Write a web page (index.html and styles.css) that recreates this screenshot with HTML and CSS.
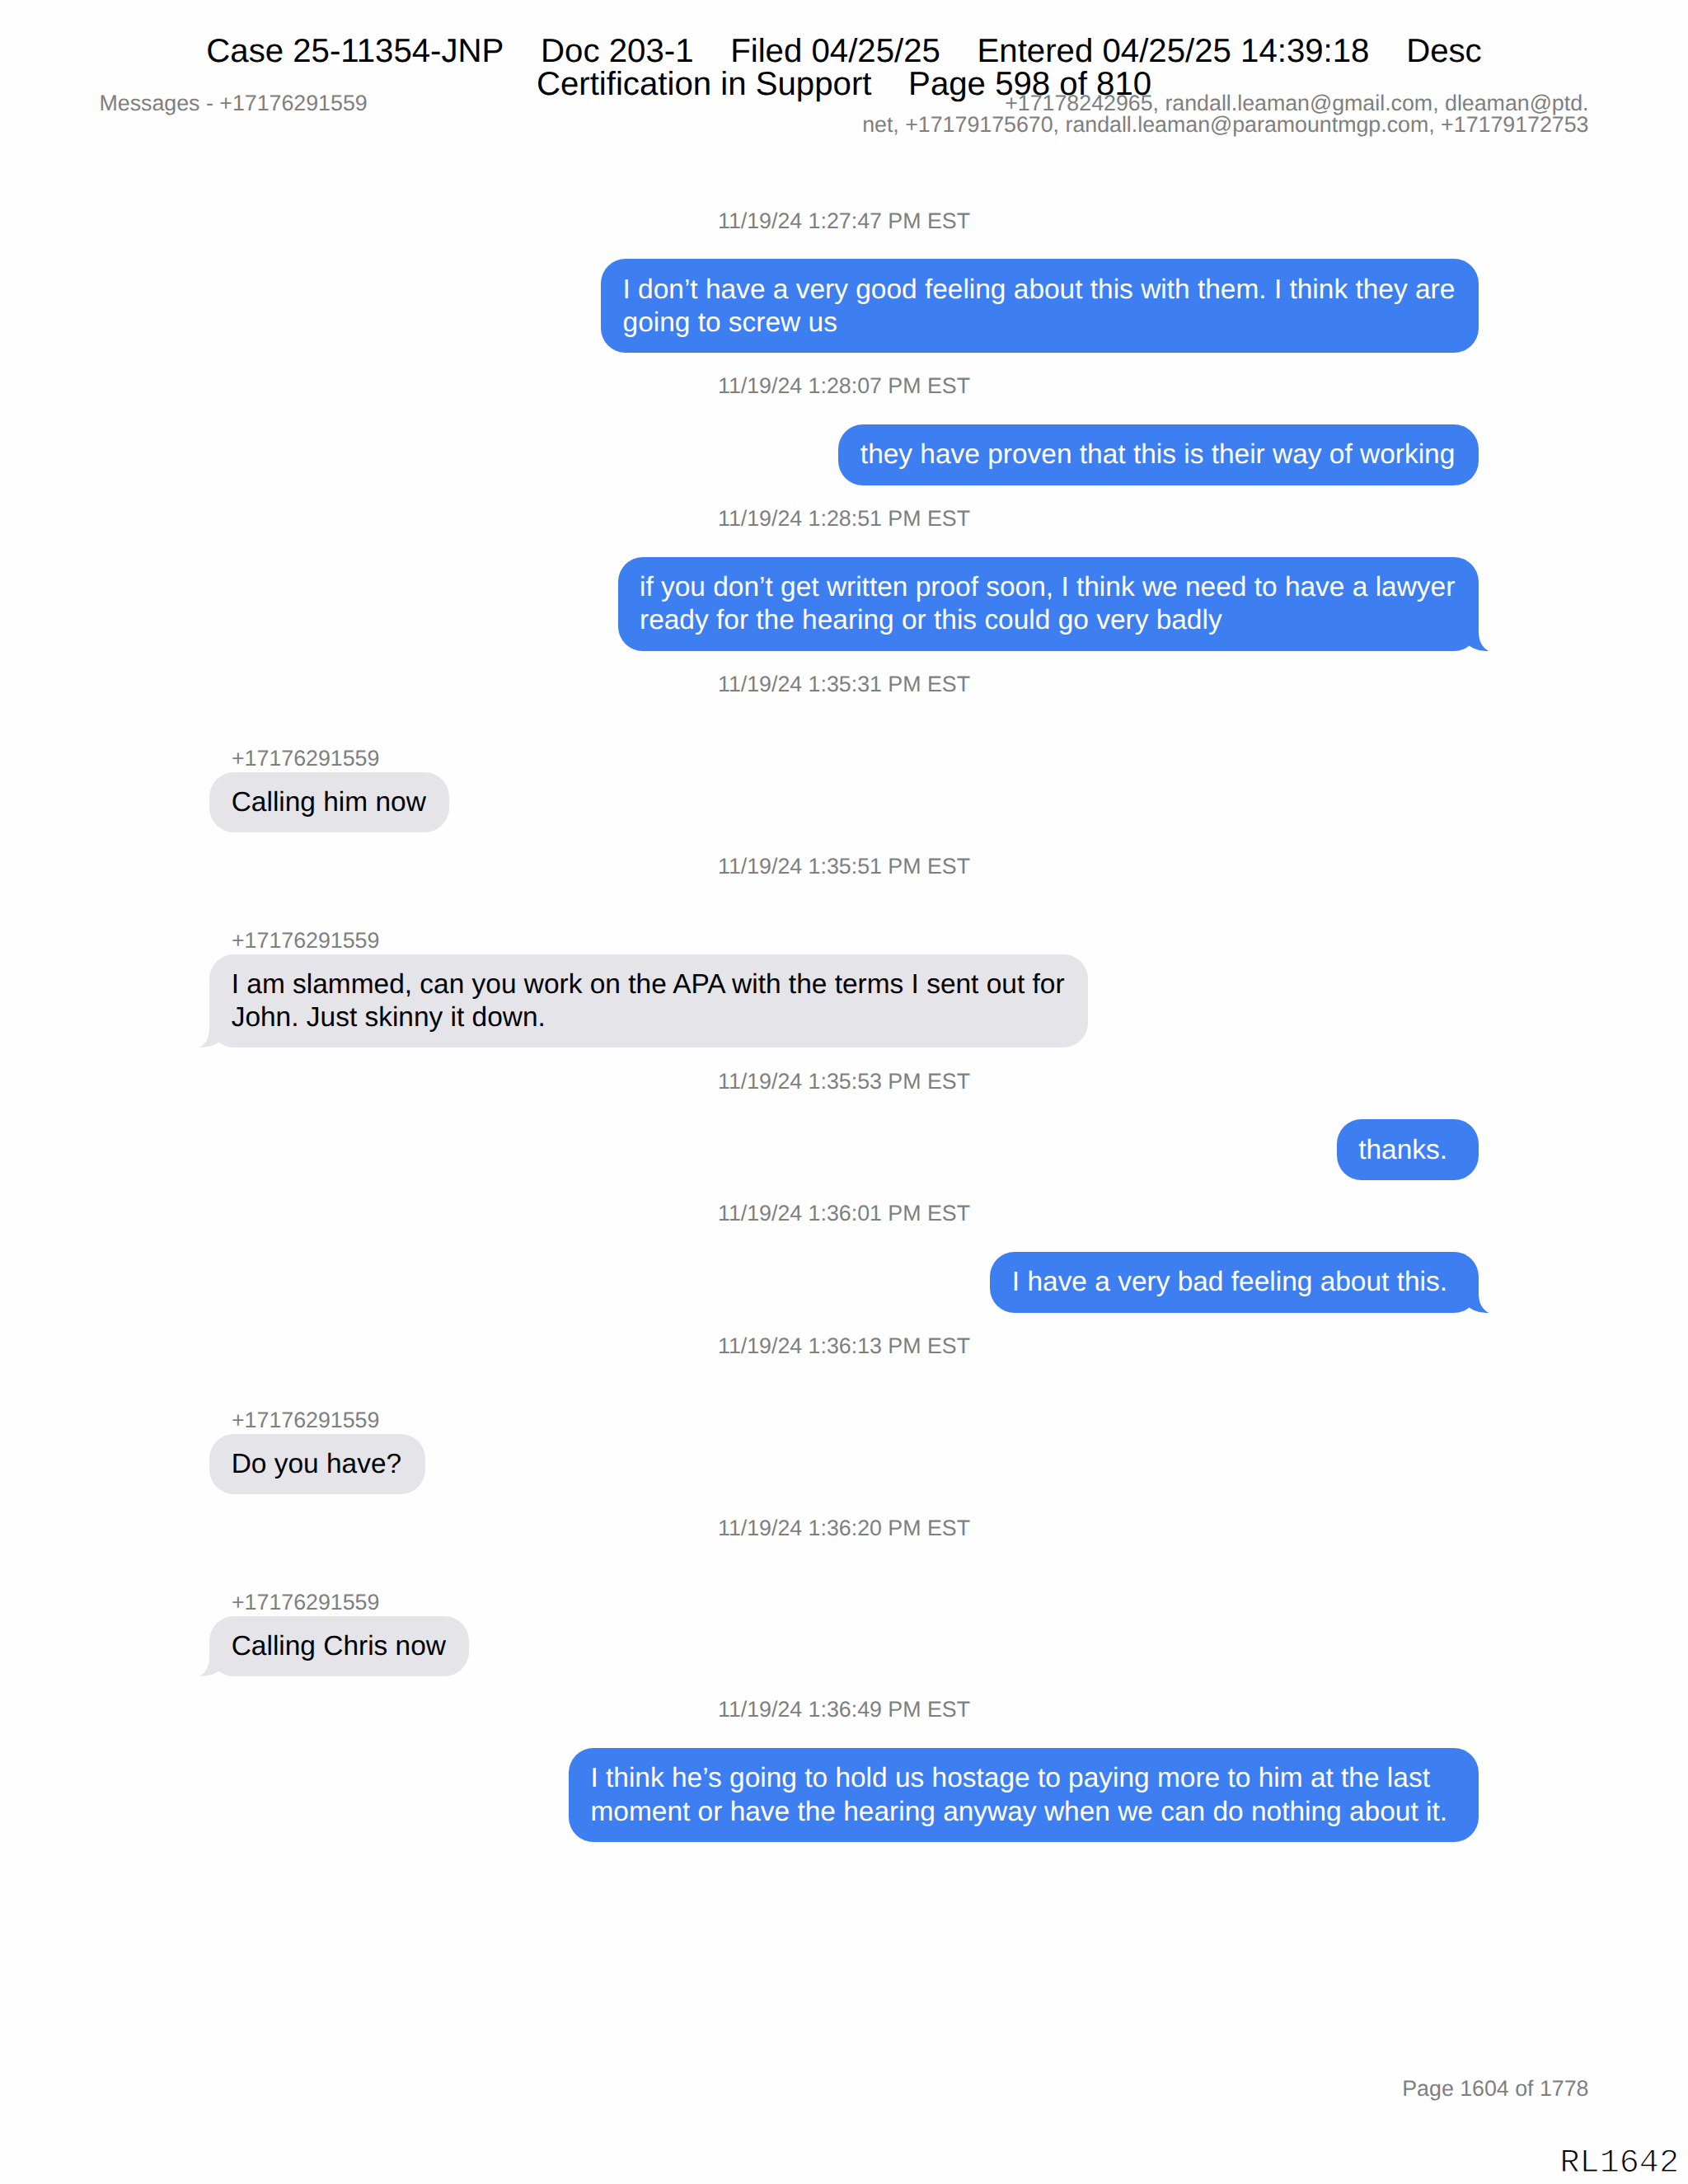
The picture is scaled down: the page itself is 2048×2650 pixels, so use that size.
FILE: index.html
```html
<!DOCTYPE html>
<html lang="en">
<head>
    <meta charset="UTF-8">
    <meta name="viewport" content="width=device-width, initial-scale=1.0">
    <title>Messages - +17176291559</title>
    <link rel="stylesheet" href="styles.css">
</head>
<body>
    <div class="court-stamp">
        Case 25-11354-JNP&nbsp;&nbsp;&nbsp; Doc 203-1&nbsp;&nbsp;&nbsp; Filed 04/25/25&nbsp;&nbsp;&nbsp; Entered 04/25/25 14:39:18&nbsp;&nbsp;&nbsp; Desc<br>
        Certification in Support&nbsp;&nbsp;&nbsp; Page 598 of 810
    </div>
    <header class="page-header">
        <div>Messages - +17176291559</div>
        <div class="participants">+17178242965, randall.leaman@gmail.com, dleaman@ptd.<br>net, +17179175670, randall.leaman@paramountmgp.com, +17179172753</div>
    </header>

    <main class="conversation">
        <div class="timestamp">11/19/24 1:27:47 PM EST</div>
        <div class="bubble sent">I don’t have a very good feeling about this with them. I think they are<br>going to screw us</div>

        <div class="timestamp">11/19/24 1:28:07 PM EST</div>
        <div class="bubble sent">they have proven that this is their way of working</div>

        <div class="timestamp">11/19/24 1:28:51 PM EST</div>
        <div class="bubble sent">if you don’t get written proof soon, I think we need to have a lawyer<br>ready for the hearing or this could go very badly
            <svg class="tail" viewBox="0 0 44 30"><path d="M14 0H30V6C30 18 34 25.5 42.3 30C33 30 24.5 28 18.6 23.5Z"/></svg>
        </div>

        <div class="timestamp">11/19/24 1:35:31 PM EST</div>
        <div class="sender">+17176291559</div>
        <div class="bubble received">Calling him now</div>

        <div class="timestamp">11/19/24 1:35:51 PM EST</div>
        <div class="sender">+17176291559</div>
        <div class="bubble received">I am slammed, can you work on the APA with the terms I sent out for<br>John. Just skinny it down.
            <svg class="tail" viewBox="0 0 44 30"><path d="M14 0H30V6C30 18 34 25.5 42.3 30C33 30 24.5 28 18.6 23.5Z"/></svg>
        </div>

        <div class="timestamp">11/19/24 1:35:53 PM EST</div>
        <div class="bubble sent">thanks.&nbsp;</div>

        <div class="timestamp">11/19/24 1:36:01 PM EST</div>
        <div class="bubble sent">I have a very bad feeling about this.&nbsp;
            <svg class="tail" viewBox="0 0 44 30"><path d="M14 0H30V6C30 18 34 25.5 42.3 30C33 30 24.5 28 18.6 23.5Z"/></svg>
        </div>

        <div class="timestamp">11/19/24 1:36:13 PM EST</div>
        <div class="sender">+17176291559</div>
        <div class="bubble received">Do you have?</div>

        <div class="timestamp">11/19/24 1:36:20 PM EST</div>
        <div class="sender">+17176291559</div>
        <div class="bubble received">Calling Chris now
            <svg class="tail" viewBox="0 0 44 30"><path d="M14 0H30V6C30 18 34 25.5 42.3 30C33 30 24.5 28 18.6 23.5Z"/></svg>
        </div>

        <div class="timestamp">11/19/24 1:36:49 PM EST</div>
        <div class="bubble sent">I think he’s going to hold us hostage to paying more to him at the last<br>moment or have the hearing anyway when we can do nothing about it.&nbsp;</div>
    </main>

    <footer class="page-footer">
        <div class="page-number">Page 1604 of 1778</div>
        <div class="bates">RL1642</div>
    </footer>
</body>
</html>
```
FILE: styles.css
```css
* {
    box-sizing: border-box;
}
body {
    font-family: "Liberation Sans", Arial, sans-serif;
    font-size: 26.77px;
    margin: 0;
    padding-top: 42px;
    width: 2048px;
    height: 2650px;
    display: flex;
    flex-direction: column;
    background-color: #fefefe;
    color: #7f7f7f;
    text-rendering: geometricPrecision;
    overflow: hidden;
}
.court-stamp {
    font-size: 40.2px;
    line-height: 40.15px;
    color: #000;
    text-align: center;
}
.page-header {
    display: flex;
    justify-content: space-between;
    margin-top: -10.6px;
    padding: 0 120.5px;
    line-height: 26.77px;
}
.participants {
    text-align: right;
}
.conversation {
    display: flex;
    flex-direction: column;
    margin-top: 62px;
    padding: 0 254.2px;
}
.timestamp {
    margin: 25.4px 0 31.75px;
    line-height: 30px;
    text-align: center;
}
.sender {
    margin: 28.2px 0 1.9px;
    padding-left: 26.8px;
    line-height: 30px;
}
.bubble {
    position: relative;
    padding: 17.2px 28.5px 16.2px 26.5px;
    border-radius: 30px;
    font-size: 33.46px;
    line-height: 40.15px;
}
.sent {
    align-self: flex-end;
    background-color: #3d7ff0;
    color: #fff;
    fill: #3d7ff0;
}
.received {
    align-self: flex-start;
    background-color: #e5e4e9;
    color: #000;
    fill: #e5e4e9;
}
.tail {
    position: absolute;
    right: -14px;
    bottom: 0;
    width: 44px;
    height: 30px;
}
.received .tail {
    right: auto;
    left: -14px;
    transform: scaleX(-1);
}
.page-footer {
    margin-top: auto;
    text-align: right;
}
.page-number {
    padding-right: 120.5px;
    line-height: 30px;
}
.bates {
    margin-top: 55px;
    padding: 0 11px 2px 0;
    font-family: "Courier New", "Liberation Mono", monospace;
    font-size: 40.15px;
    line-height: 44px;
    color: #000;
    /* thins the strokes of the stamp */
    -webkit-text-stroke: 1px #fefefe;
}
```
